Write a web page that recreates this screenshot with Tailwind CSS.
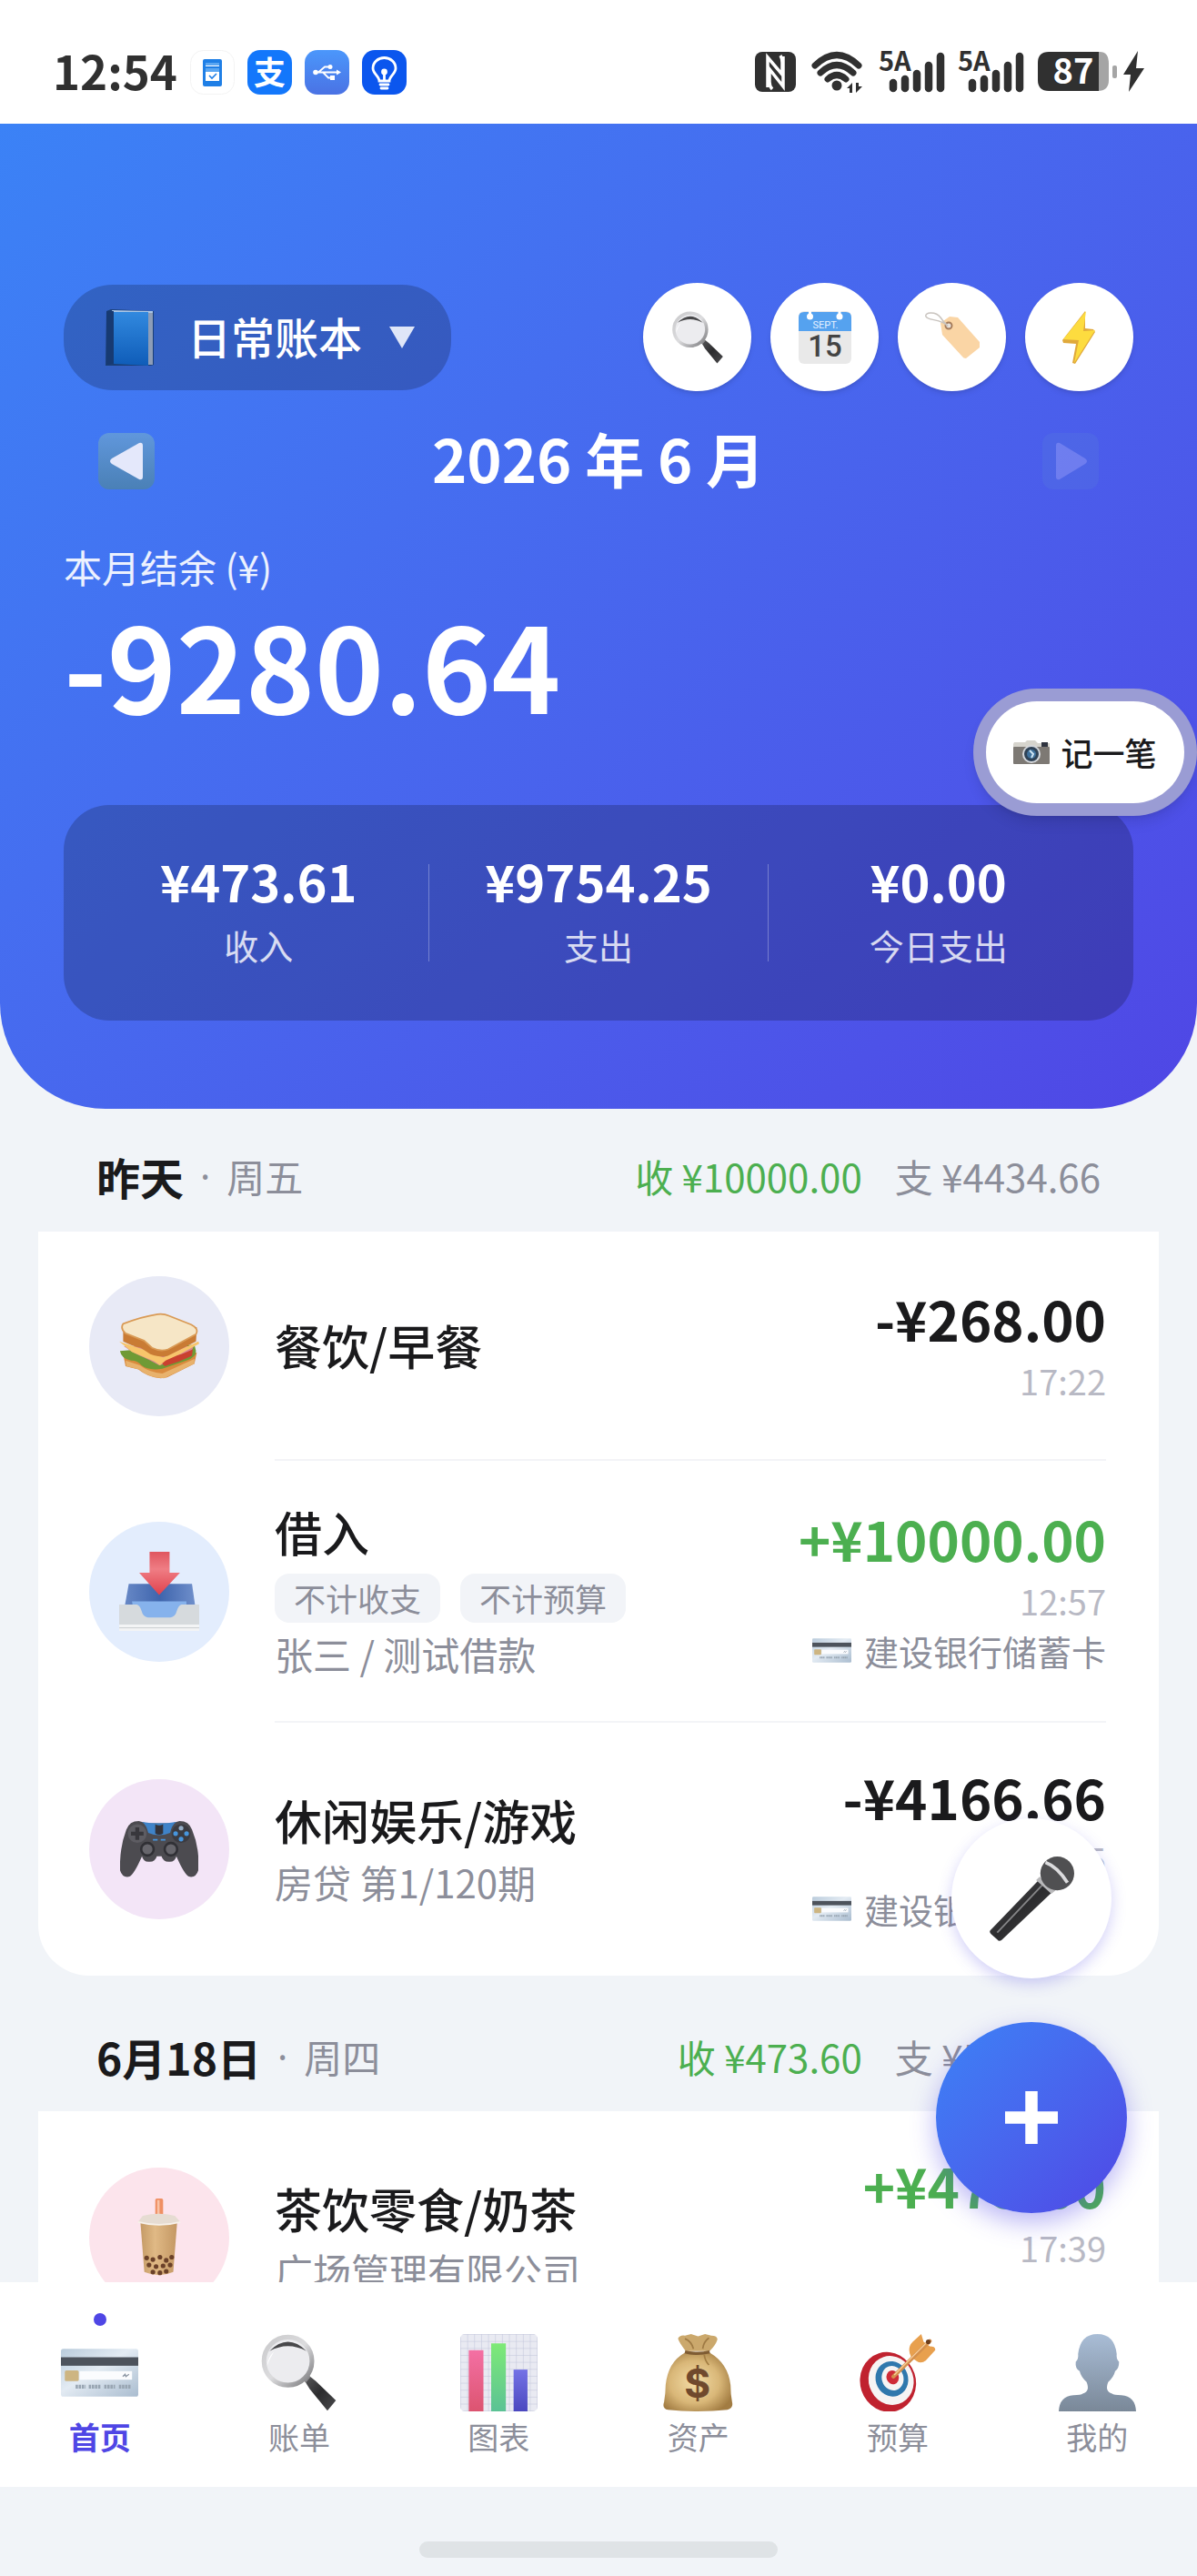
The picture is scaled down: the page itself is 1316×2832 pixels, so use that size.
<!DOCTYPE html>
<html lang="zh-CN">
<head>
    <meta charset="UTF-8">
    <meta name="viewport" content="width=device-width, initial-scale=1.0">
    <title>日常账本</title>
    <script src="https://cdn.jsdelivr.net/npm/@tailwindcss/browser@4"></script>
</head>
<body class="h-screen flex flex-col overflow-hidden bg-[#f1f4f8] text-[#1a1a1c] font-['Noto_Sans_CJK_SC',sans-serif]">

    <!-- Shared icons -->
    <svg class="absolute size-0" aria-hidden="true">
        <defs>
            <linearGradient id="cardFill" x1="0" y1="0" x2="1" y2="1">
                <stop offset="0" stop-color="#b9cbdb"/><stop offset=".45" stop-color="#e3ebf3"/><stop offset="1" stop-color="#a9bccf"/>
            </linearGradient>
            <linearGradient id="rim" x1="0" y1="0" x2="1" y2="1">
                <stop offset="0" stop-color="#c9c9cb"/><stop offset=".5" stop-color="#dcdcde"/><stop offset="1" stop-color="#77777a"/>
            </linearGradient>
            <linearGradient id="steel" x1="0" y1="0" x2="1" y2="1">
                <stop offset="0" stop-color="#5e5e60"/><stop offset=".5" stop-color="#2c2c2e"/><stop offset="1" stop-color="#4a4a4c"/>
            </linearGradient>
        </defs>
        <symbol id="card" viewBox="0 0 100 100">
            <rect x="0" y="19" width="100" height="62" rx="3" fill="url(#cardFill)"/>
            <rect x="0" y="30" width="100" height="11" fill="#4d535c"/>
            <rect x="24" y="48" width="68" height="11" fill="#fbfcfe"/>
            <rect x="5" y="47" width="18" height="14" rx="2" fill="#cdb582"/>
            <path d="M80 55l3-3 1 3 4-3" stroke="#8b95a3" stroke-width="1.5" fill="none"/>
            <path d="M19 68h13M36 68h15M56 68h14M75 68h16" stroke="#98a5b2" stroke-width="5" stroke-dasharray="3 1"/>
        </symbol>
        <symbol id="search" viewBox="0 0 100 100">
            <path d="M56 58l6-5 10 8 26 25-11 13-23-28z" fill="url(#steel)"/>
            <path d="M54 58l6-6 5 4-6 7z" fill="#8b8b8d"/>
            <circle cx="36" cy="35" r="31" fill="#ececef" stroke="url(#rim)" stroke-width="6"/>
            <path d="M12 22q24-24 48 0-24-13-48 0z" fill="#48484a"/>
            <path d="M9 41a27 27 0 0 1 9-18q-6 9-9 18z" fill="#fff"/>
        </symbol>
    </svg>

    <!-- Status bar -->
    <div class="h-[136px] shrink-0 flex items-center justify-between px-[58px] pt-[22px] bg-white text-[#303030]">
        <div class="flex items-center gap-[14px]">
            <span class="pb-1 text-[51px] leading-[52px] font-bold">12:54</span>
            <svg class="size-[49px]" viewBox="0 0 49 49">
                <rect x=".5" y=".5" width="48" height="48" rx="14" fill="#fff" stroke="#f3f3f3"/>
                <rect x="14" y="10" width="21" height="30" rx="2" fill="#1f7fe6"/>
                <path d="M17 14h15v4H17zM17 20h15v14H17z" fill="#fff"/><path d="M17 14h15v3H17zM17 20h15v4H17z" fill="#5aa6f2"/>
                <path d="M21 28l3 3 5-5" fill="none" stroke="#1f7fe6" stroke-width="1.6"/>
            </svg>
            <span class="size-[49px] rounded-[14px] bg-[#1377fb] text-white text-[35px] leading-[45px] font-bold text-center">支</span>
            <svg class="size-[49px]" viewBox="0 0 49 49">
                <defs><linearGradient id="usbBg" x1="0" y1="0" x2="0" y2="1"><stop offset="0" stop-color="#4b97fb"/><stop offset="1" stop-color="#4a72e4"/></linearGradient></defs>
                <rect width="49" height="49" rx="14" fill="url(#usbBg)"/>
                <g fill="none" stroke="#fff" stroke-width="1.8"><path d="M11 24.500h26M15 24.500l7-6h4M20 24.500l6 6h3"/></g>
                <g fill="#fff"><circle cx="12" cy="24.500" r="2.800"/><circle cx="28" cy="18.500" r="2.500"/><rect x="28" y="28" width="5" height="5"/><path d="M35 21.500l5 3-5 3z"/></g>
            </svg>
            <svg class="size-[49px]" viewBox="0 0 49 49" fill="none" stroke="#fff" stroke-width="2.800" stroke-linecap="round">
                <rect width="49" height="49" rx="14" fill="#0b56ee" stroke="none"/>
                <path d="M19 34c0-5-7-8-7-14a12.500 11.500 0 0 1 25 0c0 6-7 9-7 14zM20 38h9M21 42h7M24.500 26v8"/>
                <circle cx="24.500" cy="24" r="2" fill="#fff"/>
            </svg>
        </div>
        <div class="flex items-center gap-4">
            <svg class="w-[45px] h-[44px]" viewBox="0 0 45 44">
                <rect width="45" height="44" rx="8" fill="#303030"/>
                <path d="M14 39V6l16 19V12q0-5-2-8" fill="none" stroke="#fff" stroke-width="3.500"/>
                <path d="M31 5v33L16 19v14q0 5 3 8" fill="none" stroke="#fff" stroke-width="3.500"/>
            </svg>
            <svg class="w-[60px] h-[46px]" viewBox="0 0 60 46" fill="none" stroke="#303030" stroke-width="7" stroke-linecap="round">
                <path d="M5 16q24-23 48 0M11 24q18-17 36 0M19 31q10-9 20 0"/>
                <circle cx="29" cy="38" r="5.500" fill="#303030" stroke="none"/>
                <path d="M40 41l6-6v11h-3v-5zM57 39l-7 7V35h3v4z" fill="#303030" stroke="none"/>
            </svg>
            <svg class="w-[71px] h-[46px] overflow-visible" viewBox="0 0 71 46">
                <text x="-1" y="22" font-family="Noto Sans CJK SC" font-weight="700" font-size="29" fill="#303030">5A</text>
                <path d="M15 35v6M28 31v10M41 25v16M54 16v25M67 6v35" stroke="#303030" stroke-width="8.500" stroke-linecap="round"/>
            </svg>
            <svg class="w-[71px] h-[46px] overflow-visible" viewBox="0 0 71 46">
                <text x="-1" y="22" font-family="Noto Sans CJK SC" font-weight="700" font-size="29" fill="#303030">5A</text>
                <path d="M15 35v6M28 31v10M41 25v16M54 16v25M67 6v35" stroke="#303030" stroke-width="8.500" stroke-linecap="round"/>
            </svg>
            <svg class="w-[117px] h-[46px] overflow-visible" viewBox="0 0 117 46">
                <path d="M66 1h2q10 0 10 13v18q0 12-12 12z" fill="#a5a5a5"/>
                <path d="M12 1h55v43H12Q0 44 0 32V13Q0 1 12 1z" fill="#303030"/>
                <rect x="82" y="16" width="5" height="14" rx="2" fill="#a5a5a5"/>
                <text x="39" y="36" text-anchor="middle" font-family="Noto Sans CJK SC" font-weight="700" font-size="38" fill="#fff">87</text>
                <path d="M110 0L94 26h8l-2 19 17-26h-9z" fill="#303030"/>
            </svg>
        </div>
    </div>

    <!-- Summary header -->
    <header class="relative shrink-0 px-[70px] pt-[175px] pb-[97px] rounded-b-[116px] bg-linear-135 from-[#3b82f6] to-[#4f46e5] text-white">
        <div class="flex items-center justify-between">
            <button class="flex items-center h-[116px] pl-11 pr-10 rounded-[54px] bg-black/20">
                <svg class="w-[56px] h-[64px]" viewBox="0 0 56 64">
                    <defs><linearGradient id="book" x1="0" y1="0" x2="0" y2="1"><stop offset="0" stop-color="#3189df"/><stop offset="1" stop-color="#0f5cb8"/></linearGradient></defs>
                    <path d="M3 3l5-2 47 2v59l-3 1H2z" fill="#1b3f76"/>
                    <path d="M9 2l45 1v2H10z" fill="#a9c6e6"/>
                    <path d="M11 4h38v59l-38-2z" fill="url(#book)"/>
                    <path d="M3 3h8v58l-8 1z" fill="#173a72"/>
                    <path d="M49 5h5v57h-5z" fill="#8d9db8"/>
                </svg>
                <span class="ml-9 pb-1 text-[48px] leading-[64px] font-medium">日常账本</span>
                <svg class="ml-[30px] w-[28px] h-[24px]" viewBox="0 0 28 24"><path d="M0 0h28L14 24z" fill="#dfe6f8"/></svg>
            </button>
            <div class="flex gap-[21px]">
                <button aria-label="搜索" class="size-[119px] rounded-full bg-white shadow-md flex items-center justify-center">
                    <svg class="size-[58px]"><use href="#search"/></svg>
                </button>
                <button aria-label="日历" class="size-[119px] rounded-full bg-white shadow-md flex items-center justify-center">
                    <svg class="size-[58px]" viewBox="0 0 58 58">
                        <rect width="58" height="58" rx="6" fill="#e9e9e9"/>
                        <path d="M0 22V7q0-6 6-6h46q6 0 6 6v15z" fill="#55a2ef"/>
                        <g fill="#fff"><circle cx="12.500" cy="6" r="3.500"/><circle cx="45" cy="6" r="3.500"/><path d="M11 0h3v5h-3zM43.500 0h3v5h-3z"/></g>
                        <text x="29.500" y="19" text-anchor="middle" font-family="Roboto" font-size="11" fill="#e4f1ff">SEPT.</text>
                        <text x="29" y="50" text-anchor="middle" font-family="Roboto" font-weight="500" font-size="33" fill="#444">15</text>
                    </svg>
                </button>
                <button aria-label="标签" class="size-[119px] rounded-full bg-white shadow-md flex items-center justify-center">
                    <svg class="size-[60px]" viewBox="0 0 60 60">
                        <path d="M17 14l10-7 9 1 25 28q1 3-1 5L45 53q-3 0-4-2L19 27z" fill="#fad5a5"/>
                        <circle cx="26" cy="17" r="3.500" fill="#e9e3dc" stroke="#a57c5c" stroke-width="2"/>
                        <path d="M25 18C19 9 3 12 1 7S12 1 17 8q3 5 8 9" fill="none" stroke="#c9c4bf" stroke-width="1.500"/>
                    </svg>
                </button>
                <button aria-label="快捷" class="size-[119px] rounded-full bg-white shadow-md flex items-center justify-center">
                    <svg class="size-[60px]" viewBox="0 0 60 60">
                        <path d="M36 1L11 33l1 3 14 1-4 21 3 1 22-35-2-3-9-1z" fill="#e0a93c"/>
                        <path d="M37 1L12 32l17 1-5 25 23-36-13 1z" fill="#fddc3f"/>
                    </svg>
                </button>
            </div>
        </div>

        <div class="mt-4 h-[122px] px-[38px] flex items-center justify-between">
            <button aria-label="上个月">
                <svg class="size-[62px]" viewBox="0 0 62 62">
                    <defs><linearGradient id="key" x1="0" y1="0" x2="0" y2="1"><stop offset="0" stop-color="#6097dc"/><stop offset="1" stop-color="#4a80b6"/></linearGradient></defs>
                    <rect width="62" height="62" rx="12" fill="url(#key)"/>
                    <path d="M15 28L45 11q4-1 4 3v34q0 4-4 3L15 34q-4-3 0-6z" fill="#e4e8fb"/>
                </svg>
            </button>
            <h1 class="pb-2 text-[65px] leading-[80px] font-bold">2026 年 6 月</h1>
            <button aria-label="下个月" disabled>
                <svg class="size-[62px] opacity-20" viewBox="0 0 62 62">
                    <rect width="62" height="62" rx="12" fill="#5a86d8"/>
                    <path d="M47 28L19 11q-4-1-4 3v34q0 4 4 3l28-17q4-3 0-6z" fill="#fff"/>
                </svg>
            </button>
        </div>

        <p class="mt-[25px] text-[42px] leading-[60px] text-white/90">本月结余 (¥)</p>
        <p class="text-[129px] leading-[152px] font-bold">-9280.64</p>

        <div class="mt-20 px-7 py-[45px] flex items-center rounded-[50px] bg-black/20 text-center">
            <div class="flex-1 pb-3">
                <p class="text-[56px] leading-[76px] font-bold">¥473.61</p>
                <p class="mt-[7px] text-[38px] leading-[52px] text-white/80">收入</p>
            </div>
            <div class="w-px h-[107px] bg-white/30"></div>
            <div class="flex-1 pb-3">
                <p class="text-[56px] leading-[76px] font-bold">¥9754.25</p>
                <p class="mt-[7px] text-[38px] leading-[52px] text-white/80">支出</p>
            </div>
            <div class="w-px h-[107px] bg-white/30"></div>
            <div class="flex-1 pb-3">
                <p class="text-[56px] leading-[76px] font-bold">¥0.00</p>
                <p class="mt-[7px] text-[38px] leading-[52px] text-white/80">今日支出</p>
            </div>
        </div>

        <!-- Floating quick entry -->
        <button class="absolute right-0 bottom-[322px] w-[246px] h-[140px] rounded-full p-[14px] bg-[#9a9cd4] shadow-lg">
            <span class="h-full rounded-full bg-white flex items-center justify-center gap-3 text-[#1a1a1c] text-[35px] leading-[48px] font-medium">
                <svg class="w-[40px] h-[28px]" viewBox="0 0 40 28">
                    <path d="M1 3h12l2-2h9l3 3h13v5H0V5z" fill="#d6d4cd"/>
                    <rect x="31" y="3" width="7" height="5" fill="#2f3440"/>
                    <rect x="0" y="8" width="40" height="19" rx="1" fill="#7d7974"/>
                    <circle cx="20" cy="16" r="10" fill="#d5d8dc"/><circle cx="20" cy="16" r="8" fill="#2f4256"/>
                    <circle cx="20" cy="16" r="5" fill="#3f719c"/><path d="M18 12l4 4-2 4" stroke="#cfe6f4" stroke-width="2" fill="none"/>
                </svg>
                记一笔
            </span>
        </button>
    </header>

    <!-- Transactions -->
    <div class="relative flex-1 min-h-0">
        <main class="h-full overflow-hidden px-[42px]">
            <section>
                <div class="h-[135px] pt-3 px-[64px] flex items-center justify-between text-[42px] leading-[60px] text-[#8c8e9a]">
                    <h2 class="flex items-center gap-[18px]">
                        <span class="text-[48px] font-bold text-[#1a1a1c]">昨天</span><span class="font-['Noto_Sans',sans-serif]">·</span><span>周五</span>
                    </h2>
                    <p class="flex gap-9"><span class="text-[#4caf50]">收 ¥10000.00</span><span>支 ¥4434.66</span></p>
                </div>
                <ul class="rounded-b-[56px] bg-white">
                    <li class="flex items-center pl-14">
                        <span class="size-[154px] shrink-0 rounded-full bg-[#e8eaf6] flex items-center justify-center">
                            <svg class="size-[88px]" viewBox="0 0 100 100">
                                <path d="M5 60l3 15 16 4q12 10 28 11l8-1 34-17 3-14z" fill="#d98a3c"/>
                                <path d="M8 68l18 6q12 9 28 10l40-18v6L56 90q-18 0-31-11L9 75z" fill="#e8b26c"/>
                                <path d="M1 56q2 10 14 12 8 0 13 6 9 7 26 4l30-10q12-4 12-12l-2-8z" fill="#6f9a35"/>
                                <path d="M6 50q10 8 20 12t24 12l16-4 24-12 3-8z" fill="#d98491"/>
                                <path d="M52 70l12-7 14-3 14-6-1 8-16 7-18 6z" fill="#c9412f"/>
                                <path d="M0 44l30 10 25 10 44-20 1 3-24 13-18 8-7 6-7-5-28-12z" fill="#f7c56b"/>
                                <path d="M5 24v20q12 6 22 8l12 8q14 5 22 2l35-18 1-18z" fill="#c97b34"/>
                                <path d="M5 22Q28 13 48 10q8-1 14 2l28 11q10 5 6 12L61 54q-10 3-20-2l-10-9Q18 38 8 34 1 28 5 22z" fill="#f6e6c6" stroke="#d99a55" stroke-width="2"/>
                            </svg>
                        </span>
                        <div class="ml-[50px] mr-[58px] flex-1 min-h-[252px] flex items-center justify-between border-b-2 border-[#f3f4f7]">
                            <h3 class="text-[52px] leading-[68px] font-medium">餐饮/早餐</h3>
                            <div class="pb-1.5 text-right">
                                <p class="text-[60px] leading-[82px] font-bold">-¥268.00</p>
                                <p class="text-[38px] leading-[55px] text-[#b8b9c4]">17:22</p>
                            </div>
                        </div>
                    </li>
                    <li class="flex items-center pl-14">
                        <span class="size-[154px] shrink-0 rounded-full bg-[#e3edfd] flex items-center justify-center">
                            <svg class="size-[88px]" viewBox="0 0 100 100">
                                <defs>
                                    <linearGradient id="tray" x1="0" y1="0" x2="1" y2="0"><stop offset="0" stop-color="#6788c6"/><stop offset=".5" stop-color="#3f65ad"/><stop offset="1" stop-color="#6f8fcb"/></linearGradient>
                                    <linearGradient id="down" x1="0" y1="0" x2="0" y2="1"><stop offset="0" stop-color="#e0565f"/><stop offset=".4" stop-color="#ef7d84"/><stop offset="1" stop-color="#e0414c"/></linearGradient>
                                </defs>
                                <path d="M12 40h79l4 28H7z" fill="url(#tray)"/>
                                <path d="M16 62h68v22H20z" fill="#86b2ec"/>
                                <path d="M0 66h22q4 1 6 8 2 8 8 8h28q6 0 8-8 2-7 6-8h22v33H0z" fill="#d6dadd"/>
                                <path d="M0 91h100v8H0z" fill="#f3f4f5"/><path d="M0 95h100" stroke="#c5c9cc" stroke-width="1"/>
                                <path d="M38 0h25v26h13L50 54 25 26h13z" fill="url(#down)"/>
                            </svg>
                        </span>
                        <div class="ml-[50px] mr-[58px] flex-1 py-11 flex items-center justify-between border-b-2 border-[#f3f4f7]">
                            <div>
                                <h3 class="text-[52px] leading-[68px] font-medium">借入</h3>
                                <p class="mt-3 flex gap-[22px] text-[35px] leading-[54px] text-[#8c8e9a]">
                                    <span class="px-[21px] rounded-2xl bg-[#f2f4f8]">不计收支</span>
                                    <span class="px-[21px] rounded-2xl bg-[#f2f4f8]">不计预算</span>
                                </p>
                                <p class="mt-1 text-[42px] leading-[60px] text-[#8c8e9a]">张三 / 测试借款</p>
                            </div>
                            <div class="pb-1.5 text-right">
                                <p class="text-[60px] leading-[82px] font-bold text-[#4caf50]">+¥10000.00</p>
                                <p class="text-[38px] leading-[55px] text-[#b8b9c4]">12:57</p>
                                <p class="flex items-center justify-end gap-[14px] text-[38px] leading-[55px] text-[#8c8e9a]"><svg class="size-[43px]"><use href="#card"/></svg>建设银行储蓄卡</p>
                            </div>
                        </div>
                    </li>
                    <li class="flex items-center pl-14">
                        <span class="size-[154px] shrink-0 rounded-full bg-[#f3e5f7] flex items-center justify-center">
                            <svg class="size-[86px]" viewBox="0 0 100 100">
                                <path d="M8 25Q12 14 24 14l10 3h32l10-3q12 0 16 11 10 24 8 52-3 10-12 8-6-3-16-26-2 8-10 7-7 0-9-7h-6q-2 7-9 7-8 1-10-7Q18 82 12 85 3 87 0 77q-1-28 8-52z" fill="#4c4b50"/>
                                <path d="M28 15q22 4 44 0-6 4-8 14-14 6-28 0-2-10-8-14z" fill="#3f83c8"/>
                                <path d="M45 18q5 3 10 0v12q-5 3-10 0z" fill="#33333a"/>
                                <circle cx="22" cy="30" r="12" fill="#5d5c62"/><circle cx="78" cy="30" r="12" fill="#3b3b41"/>
                                <path d="M22 22v16M14 30h16" stroke="#38373c" stroke-width="5"/>
                                <g fill="#4795dc"><circle cx="71" cy="30" r="3"/><circle cx="85" cy="30" r="3"/><circle cx="78" cy="37" r="3"/></g><circle cx="78" cy="23" r="3" fill="#93acc4"/>
                                <g fill="#67666c" stroke="#303035" stroke-width="3"><circle cx="35" cy="50" r="8"/><circle cx="65" cy="50" r="8"/></g>
                                <path d="M42 38h6M52 38h6" stroke="#4795dc" stroke-width="2"/>
                            </svg>
                        </span>
                        <div class="ml-[50px] mr-[58px] flex-1 py-10 flex items-center justify-between">
                            <div>
                                <h3 class="text-[52px] leading-[68px] font-medium">休闲娱乐/游戏</h3>
                                <p class="mt-1 text-[42px] leading-[60px] text-[#8c8e9a]">房贷 第1/120期</p>
                            </div>
                            <div class="pb-1.5 text-right">
                                <p class="text-[60px] leading-[82px] font-bold">-¥4166.66</p>
                                <p class="text-[38px] leading-[55px] text-[#b8b9c4]">12:55</p>
                                <p class="flex items-center justify-end gap-[14px] text-[38px] leading-[55px] text-[#8c8e9a]"><svg class="size-[43px]"><use href="#card"/></svg>建设银行储蓄卡</p>
                            </div>
                        </div>
                    </li>
                </ul>
            </section>

            <section>
                <div class="h-[149px] pt-7 px-[64px] flex items-center justify-between text-[42px] leading-[60px] text-[#8c8e9a]">
                    <h2 class="flex items-center gap-[18px]">
                        <span class="text-[48px] font-bold text-[#1a1a1c]">6月18日</span><span class="font-['Noto_Sans',sans-serif]">·</span><span>周四</span>
                    </h2>
                    <p class="flex gap-9"><span class="text-[#4caf50]">收 ¥473.60</span><span>支 ¥5320.00</span></p>
                </div>
                <ul class="rounded-b-[56px] bg-white">
                    <li class="flex items-center pl-14">
                        <span class="size-[154px] shrink-0 rounded-full bg-[#fce4ec] flex items-center justify-center">
                            <svg class="size-[86px]" viewBox="0 0 100 100">
                                <defs><linearGradient id="tea" x1="0" y1="0" x2="1" y2="0"><stop offset="0" stop-color="#c49a66"/><stop offset=".4" stop-color="#e0b985"/><stop offset="1" stop-color="#c39763"/></linearGradient></defs>
                                <rect x="45" y="0" width="10" height="26" rx="2" fill="#ef8f63"/><path d="M49 2v22" stroke="#f9c3a6" stroke-width="3"/>
                                <path d="M26 30h47l-5 64q-18 8-37 0z" fill="url(#tea)"/>
                                <path d="M29 22q21-5 41 0l7 8q-27 7-54 0z" fill="#e6dcd2"/>
                                <path d="M23 30q27 7 54 0" stroke="#f7f1ea" stroke-width="2" fill="none"/>
                                <g fill="#6b4129"><circle cx="34" cy="76" r="3"/><circle cx="42" cy="78" r="3"/><circle cx="51" cy="75" r="3"/><circle cx="59" cy="79" r="3"/><circle cx="66" cy="75" r="3"/><circle cx="37" cy="85" r="3"/><circle cx="46" cy="87" r="3"/><circle cx="55" cy="86" r="3"/><circle cx="64" cy="85" r="3"/><circle cx="42" cy="94" r="3"/><circle cx="51" cy="95" r="3"/><circle cx="59" cy="93" r="3"/></g>
                            </svg>
                        </span>
                        <div class="ml-[50px] mr-[58px] flex-1 py-10 flex items-center justify-between">
                            <div>
                                <h3 class="text-[52px] leading-[68px] font-medium">茶饮零食/奶茶</h3>
                                <p class="mt-1 text-[42px] leading-[60px] text-[#8c8e9a]">广场管理有限公司</p>
                            </div>
                            <div class="pb-1.5 text-right">
                                <p class="text-[60px] leading-[82px] font-bold text-[#4caf50]">+¥473.60</p>
                                <p class="text-[38px] leading-[55px] text-[#b8b9c4]">17:39</p>
                                <p class="flex items-center justify-end gap-[14px] text-[38px] leading-[55px] text-[#8c8e9a]"><svg class="size-[43px]"><use href="#card"/></svg>建设银行储蓄卡</p>
                            </div>
                        </div>
                    </li>
                </ul>
            </section>
        </main>

        <!-- Floating actions -->
        <div class="absolute right-[77px] bottom-[76px] flex flex-col items-center gap-12">
            <button aria-label="语音记账" class="size-[176px] rounded-full bg-white shadow-[0_6px_16px_rgba(79,70,229,0.25)] flex items-center justify-center">
                <svg class="size-[93px]" viewBox="0 0 100 100">
                    <path d="M59 27l16 14L14 99q-3 2-5-1l-7-6q-3-3-1-5z" fill="url(#steel)"/>
                    <path d="M62 34L9 90" stroke="#858587" stroke-width="2"/>
                    <path d="M59 24l19 16-5 4-18-16z" fill="#b9b9bb"/>
                    <circle cx="80" cy="20" r="20" fill="#505052"/>
                    <path d="M66 7q14 5 26 24" stroke="#dcdcde" stroke-width="4" fill="none"/>
                </svg>
            </button>
            <button aria-label="添加" class="size-[210px] rounded-full bg-linear-135 from-[#3b82f6] to-[#4f46e5] shadow-[0_10px_28px_rgba(79,70,229,0.4)] flex items-center justify-center">
                <svg class="size-[58px]" viewBox="0 0 58 58"><path d="M29 0v58M0 29h58" stroke="#fff" stroke-width="13.500"/></svg>
            </button>
        </div>
    </div>

    <!-- Bottom navigation -->
    <nav class="shrink-0 grid grid-cols-6 bg-white h-[225px] pt-[57px] text-[34px] leading-[50px] text-[#8c8e9a]">
        <a href="#home" class="relative flex flex-col items-center gap-[3px] font-bold text-[#4f46e5]">
            <span class="absolute -top-[23px] size-[14px] rounded-full bg-[#4f46e5]"></span>
            <svg class="size-[85px]"><use href="#card"/></svg>首页
        </a>
        <a href="#bills" class="flex flex-col items-center gap-[3px]">
            <svg class="size-[85px]"><use href="#search"/></svg>账单
        </a>
        <a href="#charts" class="flex flex-col items-center gap-[3px]">
            <svg class="size-[85px]" viewBox="0 0 100 100">
                <defs>
                    <pattern id="grid" width="9" height="9" patternUnits="userSpaceOnUse"><path d="M9 0H0v9" fill="none" stroke="#bfc3da" stroke-width="1.200"/></pattern>
                    <linearGradient id="barA" x1="0" y1="0" x2="0" y2="1"><stop offset="0" stop-color="#f470a4"/><stop offset="1" stop-color="#dc5470"/></linearGradient>
                    <linearGradient id="barB" x1="0" y1="0" x2="0" y2="1"><stop offset="0" stop-color="#7eea77"/><stop offset="1" stop-color="#5bc295"/></linearGradient>
                    <linearGradient id="barC" x1="0" y1="0" x2="0" y2="1"><stop offset="0" stop-color="#7472e6"/><stop offset="1" stop-color="#4b48bf"/></linearGradient>
                </defs>
                <rect width="100" height="100" rx="6" fill="#e9eaf2"/><rect width="100" height="100" rx="6" fill="url(#grid)"/>
                <path d="M11 21h19v79H11z" fill="url(#barA)"/><path d="M40 12h19v88H40z" fill="url(#barB)"/><path d="M69 46h18v54H69z" fill="url(#barC)"/>
            </svg>图表
        </a>
        <a href="#assets" class="flex flex-col items-center gap-[3px]">
            <svg class="size-[85px]" viewBox="0 0 100 100">
                <defs><radialGradient id="bag" cx=".45" cy=".5" r=".6"><stop offset="0" stop-color="#f3dca6"/><stop offset=".6" stop-color="#d9b778"/><stop offset="1" stop-color="#a27c42"/></radialGradient></defs>
                <path d="M34 22q-8-10-10-16 2-5 9-4l8-2 9 3 9-3 8 2q8 0 8 5-2 7-10 15z" fill="#cba86c"/>
                <path d="M33 6q8 3 11 13M64 5q-7 5-8 14" stroke="#9f7a44" stroke-width="2" fill="none"/>
                <path d="M33 24h32q24 14 27 42 0 12 2 22 2 8-6 10-38 4-77 0-8-2-5-10Q8 76 8 66q3-30 25-42z" fill="url(#bag)"/>
                <path d="M33 23q16 4 32 0" stroke="#7f5c33" stroke-width="4" fill="none"/>
                <path d="M58 27q1 8 6 13" stroke="#a27c42" stroke-width="2" fill="none"/>
                <text x="49" y="82" text-anchor="middle" font-family="Inter" font-weight="700" font-size="52" fill="#70492d">$</text>
            </svg>资产
        </a>
        <a href="#budget" class="flex flex-col items-center gap-[3px]">
            <svg class="size-[85px]" viewBox="0 0 100 100">
                <ellipse cx="38" cy="62" rx="36" ry="39" transform="rotate(-18 38 62)" fill="#c0222f"/>
                <ellipse cx="42" cy="60" rx="29" ry="32" transform="rotate(-18 42 60)" fill="#f6f4f4"/>
                <ellipse cx="43" cy="58" rx="21" ry="23" transform="rotate(-18 43 58)" fill="#2f78ad"/>
                <ellipse cx="44" cy="57" rx="14" ry="16" transform="rotate(-18 44 57)" fill="#f6f4f4"/>
                <ellipse cx="44" cy="56" rx="8" ry="9" transform="rotate(-18 44 56)" fill="#cf2b38"/>
                <path d="M68 30q-6-12 2-20l11-10 3 10 8 6q8 0 7 5L87 34q-6 5-12 1z" fill="#e8a04e"/>
                <path d="M45 55L92 9" stroke="#d48f4c" stroke-width="5" stroke-linecap="round"/><path d="M46 53L90 9" stroke="#f7cf9b" stroke-width="1.500"/>
                <circle cx="90" cy="10" r="3" fill="#6b3d1c"/>
            </svg>预算
        </a>
        <a href="#me" class="flex flex-col items-center gap-[3px]">
            <svg class="size-[85px]" viewBox="0 0 100 100">
                <defs><linearGradient id="person" x1="0" y1="0" x2="0" y2="1"><stop offset="0" stop-color="#a9bdd6"/><stop offset="1" stop-color="#7a8898"/></linearGradient></defs>
                <path d="M50 0q22 0 25 26-1 6 3 10 0 9-5 12-2 8-9 14-5 12 5 15 2 2 12 2 18 1 19 21H0q1-20 19-21 10 0 12-2 10-3 5-15-7-6-9-14-6-3-5-12 4-4 3-10Q28 0 50 0z" fill="url(#person)"/>
            </svg>我的
        </a>
    </nav>
    <div class="shrink-0 h-[98px] pt-[60px]">
        <div class="mx-auto w-[30%] h-[18px] rounded-full bg-[#dfe3e6]"></div>
    </div>
</body>
</html>
